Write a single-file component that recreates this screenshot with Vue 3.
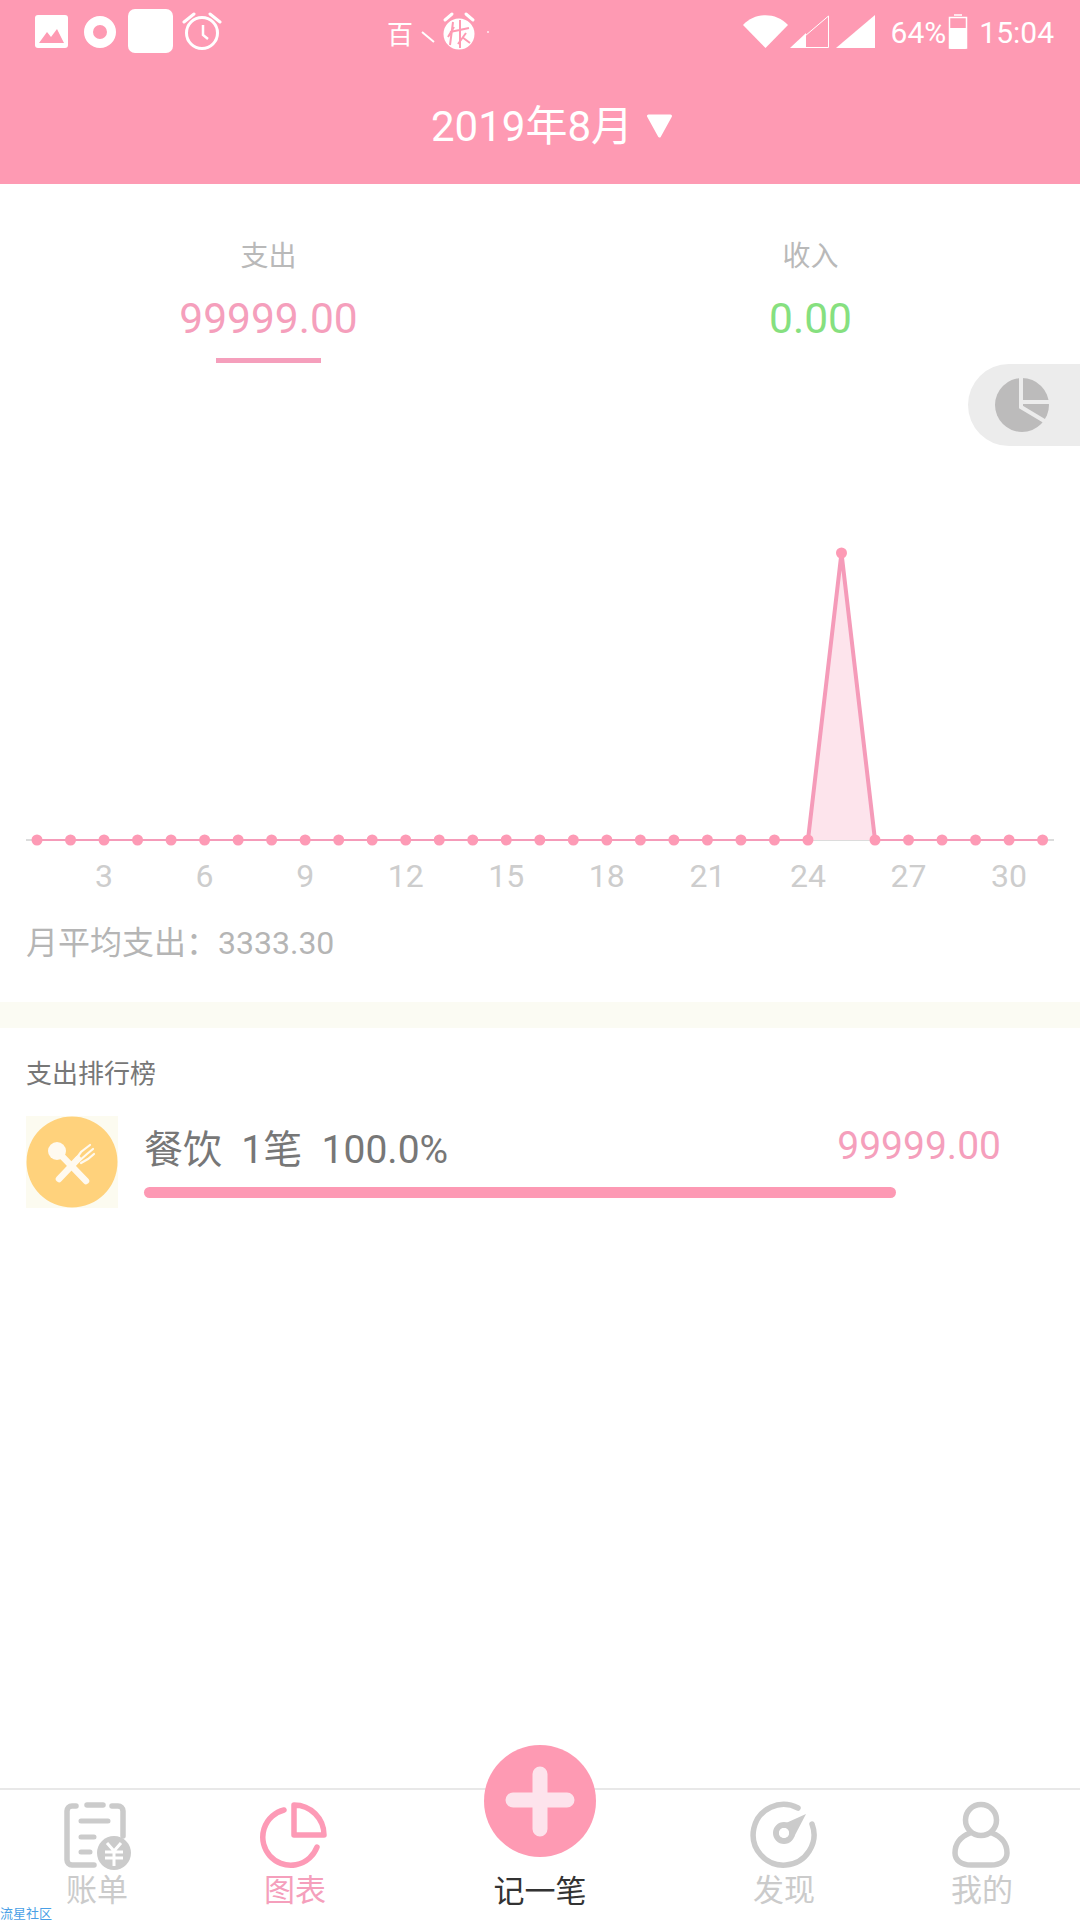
<script setup>
const days = Array.from({ length: 31 }, (_, i) => i + 1)
const dayX = (d) => 37 + (d - 1) * 33.52
const labels = [3, 6, 9, 12, 15, 18, 21, 24, 27, 30]
const base = 477
const peak = 190
const dotY = (d) => (d === 25 ? peak : base)
const linePoints = days.map((d) => `${dayX(d)},${dotY(d)}`).join(' ')
const spikePoints = `${dayX(24)},${base} ${dayX(25)},${peak} ${dayX(26)},${base}`
</script>

<template>
  <div class="page">
    <header class="head">
      <div class="status">
        <svg class="s-img" width="33" height="33" viewBox="0 0 33 33">
          <rect width="33" height="33" rx="3" fill="#fff" />
          <path d="M4 28 L12 17 L16 22 L22 14 L29 28 Z" fill="#fe9ab3" />
        </svg>
        <svg class="s-ring" width="32" height="32" viewBox="0 0 32 32">
          <circle cx="16" cy="16" r="11.500" fill="none" stroke="#fff" stroke-width="9" />
        </svg>
        <div class="s-square"></div>
        <svg class="s-alarm" width="40" height="40" viewBox="0 0 40 40">
          <circle cx="20" cy="22" r="15.500" fill="none" stroke="#fff" stroke-width="3" />
          <path d="M21 14 V24 L26 28" fill="none" stroke="#fff" stroke-width="2.500" />
          <path d="M2 11 L12 3 M38 11 L28 3" stroke="#fff" stroke-width="3" stroke-linecap="round" />
        </svg>
        <span class="s-bai">百</span>
        <svg class="s-dash" width="14" height="14" viewBox="0 0 14 14">
          <path d="M1 2 L13 12" stroke="#fff" stroke-width="2" />
        </svg>
        <svg class="s-alarm2" width="36" height="40" viewBox="0 0 36 40">
          <circle cx="18" cy="23" r="15.500" fill="#fff" />
          <path d="M4 9 L11 3 M32 9 L25 3" stroke="#fff" stroke-width="3" stroke-linecap="round" />
          <path d="M12 11 L9 34 M19 9 V37 M9 21 L28 17 M25 22 L17 33 M21 26 L29 32 M13 16 L7 26" stroke="#fe9ab3" stroke-width="2" fill="none" />
        </svg>
        <i class="s-dot"></i>
        <div class="s-right">
          <svg width="45" height="33" viewBox="0 0 45 33">
            <path d="M0 10 C12 -3 33 -3 45 10 L22.500 33 Z" fill="#fff" />
          </svg>
          <svg class="s-sig" width="39" height="33" viewBox="0 0 39 33">
            <path d="M38.500 1 V32.500 H1.500 Z" fill="none" stroke="#fff" stroke-width="1" />
            <path d="M16 18 V33 H0 Z" fill="#fff" />
          </svg>
          <svg class="s-sig2" width="39" height="33" viewBox="0 0 39 33">
            <path d="M39 0 V33 H0 Z" fill="#fff" />
          </svg>
          <span class="s-pct">64%</span>
          <svg class="s-bat" width="20" height="36" viewBox="0 0 20 36">
            <path d="M6 1 H14 M1.500 3.500 H18.500 V34 H1.500 Z" fill="none" stroke="#fff" stroke-width="1.500" />
            <path d="M1 14 H19 V33 Q19 35 17 35 H3 Q1 35 1 33 Z" fill="#fff" />
          </svg>
          <span class="s-time">15:04</span>
        </div>
      </div>
      <div class="nav">
        <span class="month">2019年8月</span>
        <svg class="caret" width="27" height="24" viewBox="0 0 27 24">
          <path d="M2.500 2 H24.500 L13.500 22 Z" fill="#fff" stroke="#fff" stroke-width="3" stroke-linejoin="round" />
        </svg>
      </div>
    </header>

    <main class="main">
      <section class="summary">
        <div class="sum-col">
          <div class="sum-label">支出</div>
          <div class="sum-value pink">99999.00</div>
          <div class="sum-line"></div>
        </div>
        <div class="sum-col income">
          <div class="sum-label">收入</div>
          <div class="sum-value green">0.00</div>
        </div>
      </section>

      <section class="chart">
        <div class="toggle">
          <svg width="56" height="56" viewBox="0 0 56 56">
            <circle cx="28" cy="28" r="27" fill="#bcbbbb" />
            <path d="M27 0 V25 L56 25 M27 25 L27 30 L52 45" fill="none" stroke="#ececec" stroke-width="4" />
          </svg>
        </div>
        <svg class="plot" width="1080" height="537" viewBox="0 0 1080 537">
          <line x1="26" y1="477" x2="1054" y2="477" stroke="#dcdcdc" stroke-width="2" />
          <polygon :points="spikePoints" fill="#fde4ec" />
          <polyline :points="linePoints" fill="none" stroke="#f59bb9" stroke-width="2" />
          <polyline :points="spikePoints" fill="none" stroke="#f59bb9" stroke-width="4" />
          <circle v-for="d in days" :key="d" :cx="dayX(d)" :cy="dotY(d)" r="5.500" fill="#fd9ab5" />
          <text v-for="l in labels" :key="l" class="tick" :x="dayX(l)" y="524" text-anchor="middle">{{ l }}</text>
        </svg>
      </section>

      <div class="avg">月平均支出：3333.30</div>
      <div class="band"></div>

      <h2 class="rank-title">支出排行榜</h2>
      <div class="rank-row">
        <div class="cat-box">
          <svg width="92" height="92" viewBox="0 0 92 92">
            <circle cx="46" cy="46" r="45.500" fill="#ffd27c" />
            <g transform="translate(0 -4)">
              <path d="M31 39 L60 69" stroke="#fffaf0" stroke-width="6.500" stroke-linecap="round" />
              <circle cx="31" cy="39" r="9" fill="#fffaf0" />
              <path d="M33 67 L52 47" stroke="#fffaf0" stroke-width="6.500" stroke-linecap="round" />
              <path d="M50 47 L55 40 L64 33 M53 49 L61 42 L67 37 M55 51 L62 47 L68 42" fill="none" stroke="#fffaf0" stroke-width="2.200" stroke-linecap="round" />
            </g>
          </svg>
        </div>
        <div class="cat-body">
          <div class="cat-top">
            <span class="cat-name">餐饮&nbsp; 1笔&nbsp; 100.0%</span>
            <span class="cat-amt">99999.00</span>
          </div>
          <div class="cat-bar"></div>
        </div>
      </div>
    </main>

    <footer class="tabs">
      <div class="tab">
        <svg class="ico" width="70" height="70" viewBox="0 0 70 70">
          <g fill="none" stroke="#cbcbcb" stroke-width="5.500" stroke-linecap="round">
            <path d="M14 6 H10 A5 5 0 0 0 5 11 V60 A5 5 0 0 0 10 65 H32" />
            <path d="M50 6 H56 A5 5 0 0 1 61 11 V36" />
            <path d="M25 5 H41" />
            <path d="M19 21 H46 M19 37 H32 M19 52 H28" stroke-width="5" />
          </g>
          <circle cx="52" cy="53" r="17" fill="#cbcbcb" />
          <path d="M45 43 L52 51 L59 43 M43 52 H61 M43 58 H61 M52 51 V66" fill="none" stroke="#fff" stroke-width="3" />
        </svg>
        <span class="tab-label">账单</span>
      </div>
      <div class="tab active">
        <svg class="ico" width="70" height="70" viewBox="0 0 70 70">
          <g fill="none" stroke="#fd9ab6" stroke-width="5.500" stroke-linecap="round" stroke-linejoin="round">
            <path d="M24 10 A28 28 0 1 0 57 47" />
            <path d="M34 5 V35 H64 A30 30 0 0 0 34 5 Z" />
          </g>
        </svg>
        <span class="tab-label">图表</span>
      </div>
      <div class="tab add">
        <div class="add-btn">
          <svg width="112" height="112" viewBox="0 0 112 112">
            <circle cx="56" cy="56" r="56" fill="#fe9ab3" />
            <path d="M56 29 V84 M29 55 H83" stroke="#fde3ec" stroke-width="15" stroke-linecap="round" />
          </svg>
        </div>
        <span class="tab-label dark">记一笔</span>
      </div>
      <div class="tab">
        <svg class="ico" width="70" height="70" viewBox="0 0 70 70">
          <path d="M49 8 A30.400 30.400 0 1 0 63 24" fill="none" stroke="#cbcbcb" stroke-width="5.500" stroke-linecap="round" />
          <circle cx="35" cy="33" r="8" fill="none" stroke="#cbcbcb" stroke-width="6" />
          <path d="M57 14 L37 23 L45 37 Z" fill="#cbcbcb" />
          <circle cx="35" cy="33" r="5" fill="#fff" />
        </svg>
        <span class="tab-label">发现</span>
      </div>
      <div class="tab">
        <svg class="ico" width="70" height="70" viewBox="0 0 70 70">
          <g fill="none" stroke="#cbcbcb" stroke-width="5.500" stroke-linecap="round">
            <circle cx="34" cy="20" r="15.500" />
            <path d="M23 33 C13 37 8 44 8 53 C8 60 14 65 24 65 H44 C54 65 60 60 60 53 C60 44 55 37 45 33" />
          </g>
        </svg>
        <span class="tab-label">我的</span>
      </div>
      <span class="mark">流星社区</span>
    </footer>
  </div>
</template>

<style scoped>
.page {
  width: 1080px;
  height: 1920px;
  display: flex;
  flex-direction: column;
  background: #fff;
  overflow: hidden;
  font-family: Roboto, "Noto Sans CJK SC", sans-serif;
}
.head {
  height: 184px;
  background: #fe9ab3;
  color: #fff;
  flex: none;
}
.status {
  height: 60px;
  display: flex;
  align-items: flex-start;
  padding: 0 26px 0 35px;
  box-sizing: border-box;
}
.s-img { margin-top: 15px; }
.s-ring { margin: 16px 0 0 16px; }
.s-square {
  width: 45px;
  height: 44px;
  margin: 9px 0 0 12px;
  background: #fff;
  border-radius: 7px;
}
.s-alarm { margin: 11px 0 0 9px; }
.s-bai {
  margin: 18px 0 0 165px;
  font-size: 26px;
  line-height: 34px;
}
.s-dash { margin: 30px 0 0 8px; }
.s-alarm2 { margin: 11px 0 0 6px; }
.s-dot {
  width: 2px;
  height: 2px;
  margin: 31px 0 0 10px;
  background: #ffd5e0;
}
.s-right {
  margin-left: auto;
  display: flex;
  align-items: flex-start;
  padding-top: 15px;
}
.s-sig { margin-left: 2px; }
.s-sig2 { margin-left: 7px; }
.s-pct {
  margin: 1px 0 0 16px;
  font-size: 30px;
  line-height: 34px;
}
.s-bat { margin: -1px 0 0 2px; }
.s-time {
  margin: 1px 0 0 11px;
  font-size: 30px;
  line-height: 34px;
}
.nav {
  height: 124px;
  display: flex;
  align-items: center;
  justify-content: center;
  padding: 10px 0 0 24px;
  box-sizing: border-box;
}
.month {
  font-size: 42px;
  line-height: 50px;
}
.caret { margin: 0 0 3px 13px; }

.main {
  flex: 1;
  min-height: 0;
}
.summary {
  height: 179px;
  display: grid;
  grid-template-columns: 537px 1fr;
  text-align: center;
}
.sum-col {
  padding-top: 55px;
  display: flex;
  flex-direction: column;
  align-items: center;
}
.income { padding-left: 4px; }
.sum-label {
  font-size: 28px;
  line-height: 36px;
  color: #b9b9b9;
}
.sum-value {
  margin-top: 23px;
  font-size: 42.500px;
  line-height: 42px;
}
.pink { color: #f59fbc; }
.green { color: #86e07f; }
.sum-line {
  width: 105px;
  height: 5px;
  margin-top: 18px;
  background: #f59fbc;
}
.chart {
  position: relative;
  height: 537px;
}
.toggle {
  position: absolute;
  top: 1px;
  right: 0;
  width: 112px;
  height: 82px;
  display: flex;
  align-items: center;
  padding-left: 26px;
  box-sizing: border-box;
  background: #ececec;
  border-radius: 41px 0 0 41px;
}
.plot { display: block; }
.tick {
  font-size: 32px;
  fill: #cdcdcd;
  font-family: Roboto, sans-serif;
}
.avg {
  height: 102px;
  padding: 21px 0 0 26px;
  box-sizing: border-box;
  font-size: 32px;
  line-height: 44px;
  color: #b5b5b5;
}
.band {
  height: 26px;
  background: #fbfbf3;
}
.rank-title {
  height: 88px;
  margin: 0;
  padding: 2px 0 0 26px;
  box-sizing: border-box;
  font-size: 26px;
  font-weight: 400;
  line-height: 88px;
  color: #777;
}
.rank-row {
  display: flex;
  padding-left: 26px;
}
.cat-box {
  width: 92px;
  height: 92px;
  background: #fcfbf0;
  flex: none;
}
.cat-box svg { display: block; }
.cat-body {
  width: 857px;
  margin-left: 26px;
}
.cat-top {
  display: flex;
  justify-content: space-between;
  height: 71px;
}
.cat-name {
  font-size: 39px;
  line-height: 46px;
  margin-top: 11px;
  color: #777;
}
.cat-amt {
  font-size: 39px;
  line-height: 48px;
  margin-top: 6px;
  color: #f59fbc;
}
.cat-bar {
  width: 752px;
  height: 11px;
  background: #fd99b4;
  border-radius: 6px;
}

.tabs {
  position: relative;
  height: 132px;
  flex: none;
  display: grid;
  grid-template-columns: 194px 202px 288px 200px 196px;
  border-top: 2px solid #e8e8e8;
  box-sizing: border-box;
}
.tab {
  position: relative;
  display: flex;
  flex-direction: column;
  align-items: center;
  padding-top: 10px;
}
.ico {
  display: block;
  flex: none;
}
.tab-label {
  margin-top: 3px;
  font-size: 31px;
  line-height: 36px;
  color: #cbcbcb;
}
.active .tab-label { color: #f59fbc; }
.tab-label.dark {
  margin-top: 74px;
  color: #333;
}
.add-btn {
  position: absolute;
  top: -45px;
  left: 88px;
  width: 112px;
  height: 112px;
}
.add-btn svg { display: block; }
.mark {
  position: absolute;
  left: 0;
  bottom: 0;
  font-size: 13px;
  line-height: 13px;
  color: #4a9fe6;
}
</style>
